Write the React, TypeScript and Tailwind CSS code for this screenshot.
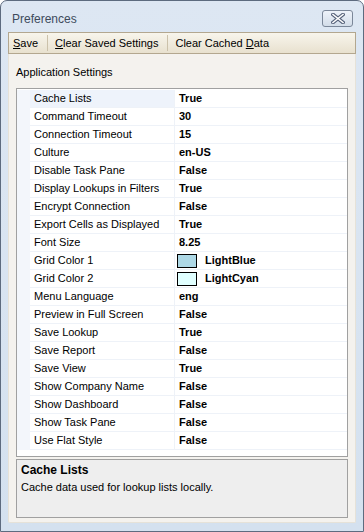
import React from 'react';

type Row = { name: string; value: string; swatch?: string };

const rows: Row[] = [
  { name: 'Cache Lists', value: 'True' },
  { name: 'Command Timeout', value: '30' },
  { name: 'Connection Timeout', value: '15' },
  { name: 'Culture', value: 'en-US' },
  { name: 'Disable Task Pane', value: 'False' },
  { name: 'Display Lookups in Filters', value: 'True' },
  { name: 'Encrypt Connection', value: 'False' },
  { name: 'Export Cells as Displayed', value: 'True' },
  { name: 'Font Size', value: '8.25' },
  { name: 'Grid Color 1', value: 'LightBlue', swatch: '#add8e6' },
  { name: 'Grid Color 2', value: 'LightCyan', swatch: '#e0ffff' },
  { name: 'Menu Language', value: 'eng' },
  { name: 'Preview in Full Screen', value: 'False' },
  { name: 'Save Lookup', value: 'True' },
  { name: 'Save Report', value: 'False' },
  { name: 'Save View', value: 'True' },
  { name: 'Show Company Name', value: 'False' },
  { name: 'Show Dashboard', value: 'False' },
  { name: 'Show Task Pane', value: 'False' },
  { name: 'Use Flat Style', value: 'False' },
];

function CloseButton() {
  return (
    <div className="mt-[9px] mr-[3px] flex h-[17px] w-[31px] items-center justify-center rounded-[3px] border border-[#7b8799] bg-gradient-to-b from-[#eef3fa] to-[#d3dde9]">
      <svg width="14" height="11" viewBox="0 0 14 11">
        <path d="M2 1.5 L12 9.5 M12 1.5 L2 9.5" stroke="#56627a" strokeWidth="3.6" strokeLinecap="square" />
        <path d="M2 1.5 L12 9.5 M12 1.5 L2 9.5" stroke="#ffffff" strokeWidth="1.6" strokeLinecap="square" />
      </svg>
    </div>
  );
}

function MenuSep() {
  return <div className="ml-[9px] mr-[7px] h-[16px] w-px bg-[#cbc1aa]" />;
}

export default function App() {
  return (
    <div className="flex h-[532px] w-[364px] flex-col rounded-t-[7px] border border-[#5d6b7f] bg-gradient-to-b from-[#dde7f3] to-[#d4e1ef] px-[7px] pb-[8px] font-['Liberation_Sans',Arial,sans-serif] text-[11px] text-black">
      <div className="flex h-[31px] shrink-0 items-start justify-between">
        <span className="ml-[4px] mt-[11px] text-[12px] leading-[14px] text-[#3e4b5c]">Preferences</span>
        <CloseButton />
      </div>

      <div className="flex h-[22px] shrink-0 items-center border border-[#b3a78f] bg-gradient-to-b from-[#f8f5ec] to-[#e8e1cf] pl-[4px] leading-[13px]">
        <span>
          <span className="underline">S</span>ave
        </span>
        <MenuSep />
        <span>
          <span className="underline">C</span>lear Saved Settings
        </span>
        <MenuSep />
        <span>
          Clear Cached <span className="underline">D</span>ata
        </span>
      </div>

      <div className="flex flex-1 flex-col rounded-b-[2px] border border-t-0 border-[#e6e2d8] bg-[#f4f2ee] px-[7px] pt-[12px]">
        <div className="leading-[13px]">Application Settings</div>

        <div className="mt-[9px] h-[369px] border border-[#a0a0a0] bg-white pt-px">
          {rows.map((r, i) => (
            <div key={r.name} className="flex h-[18px] items-stretch">
              <div className="w-[13px] shrink-0 bg-[#f3f6fb]" />
              <div
                className={`flex w-[145px] shrink-0 items-center border-r border-b border-[#eef2f8] pl-[4px] ${
                  i === 0 ? 'bg-[#eef3fb]' : 'bg-white'
                }`}
              >
                {r.name}
              </div>
              <div className="flex flex-1 items-center border-b border-[#eef2f8] pl-[2px] font-bold">
                {r.swatch ? (
                  <>
                    <span
                      className="mr-[8px] h-[14px] w-[20px] border border-black"
                      style={{ backgroundColor: r.swatch }}
                    />
                    {r.value}
                  </>
                ) : (
                  <span className="pl-[2px]">{r.value}</span>
                )}
              </div>
            </div>
          ))}
        </div>

        <div className="mt-[2px] h-[59px] border border-[#a0a0a0] bg-[#eeeeee] px-[4px] pt-[3px]">
          <div className="text-[12px] font-bold leading-[14px]">Cache Lists</div>
          <div className="mt-[4px] leading-[13px]">Cache data used for lookup lists locally.</div>
        </div>
      </div>
    </div>
  );
}
